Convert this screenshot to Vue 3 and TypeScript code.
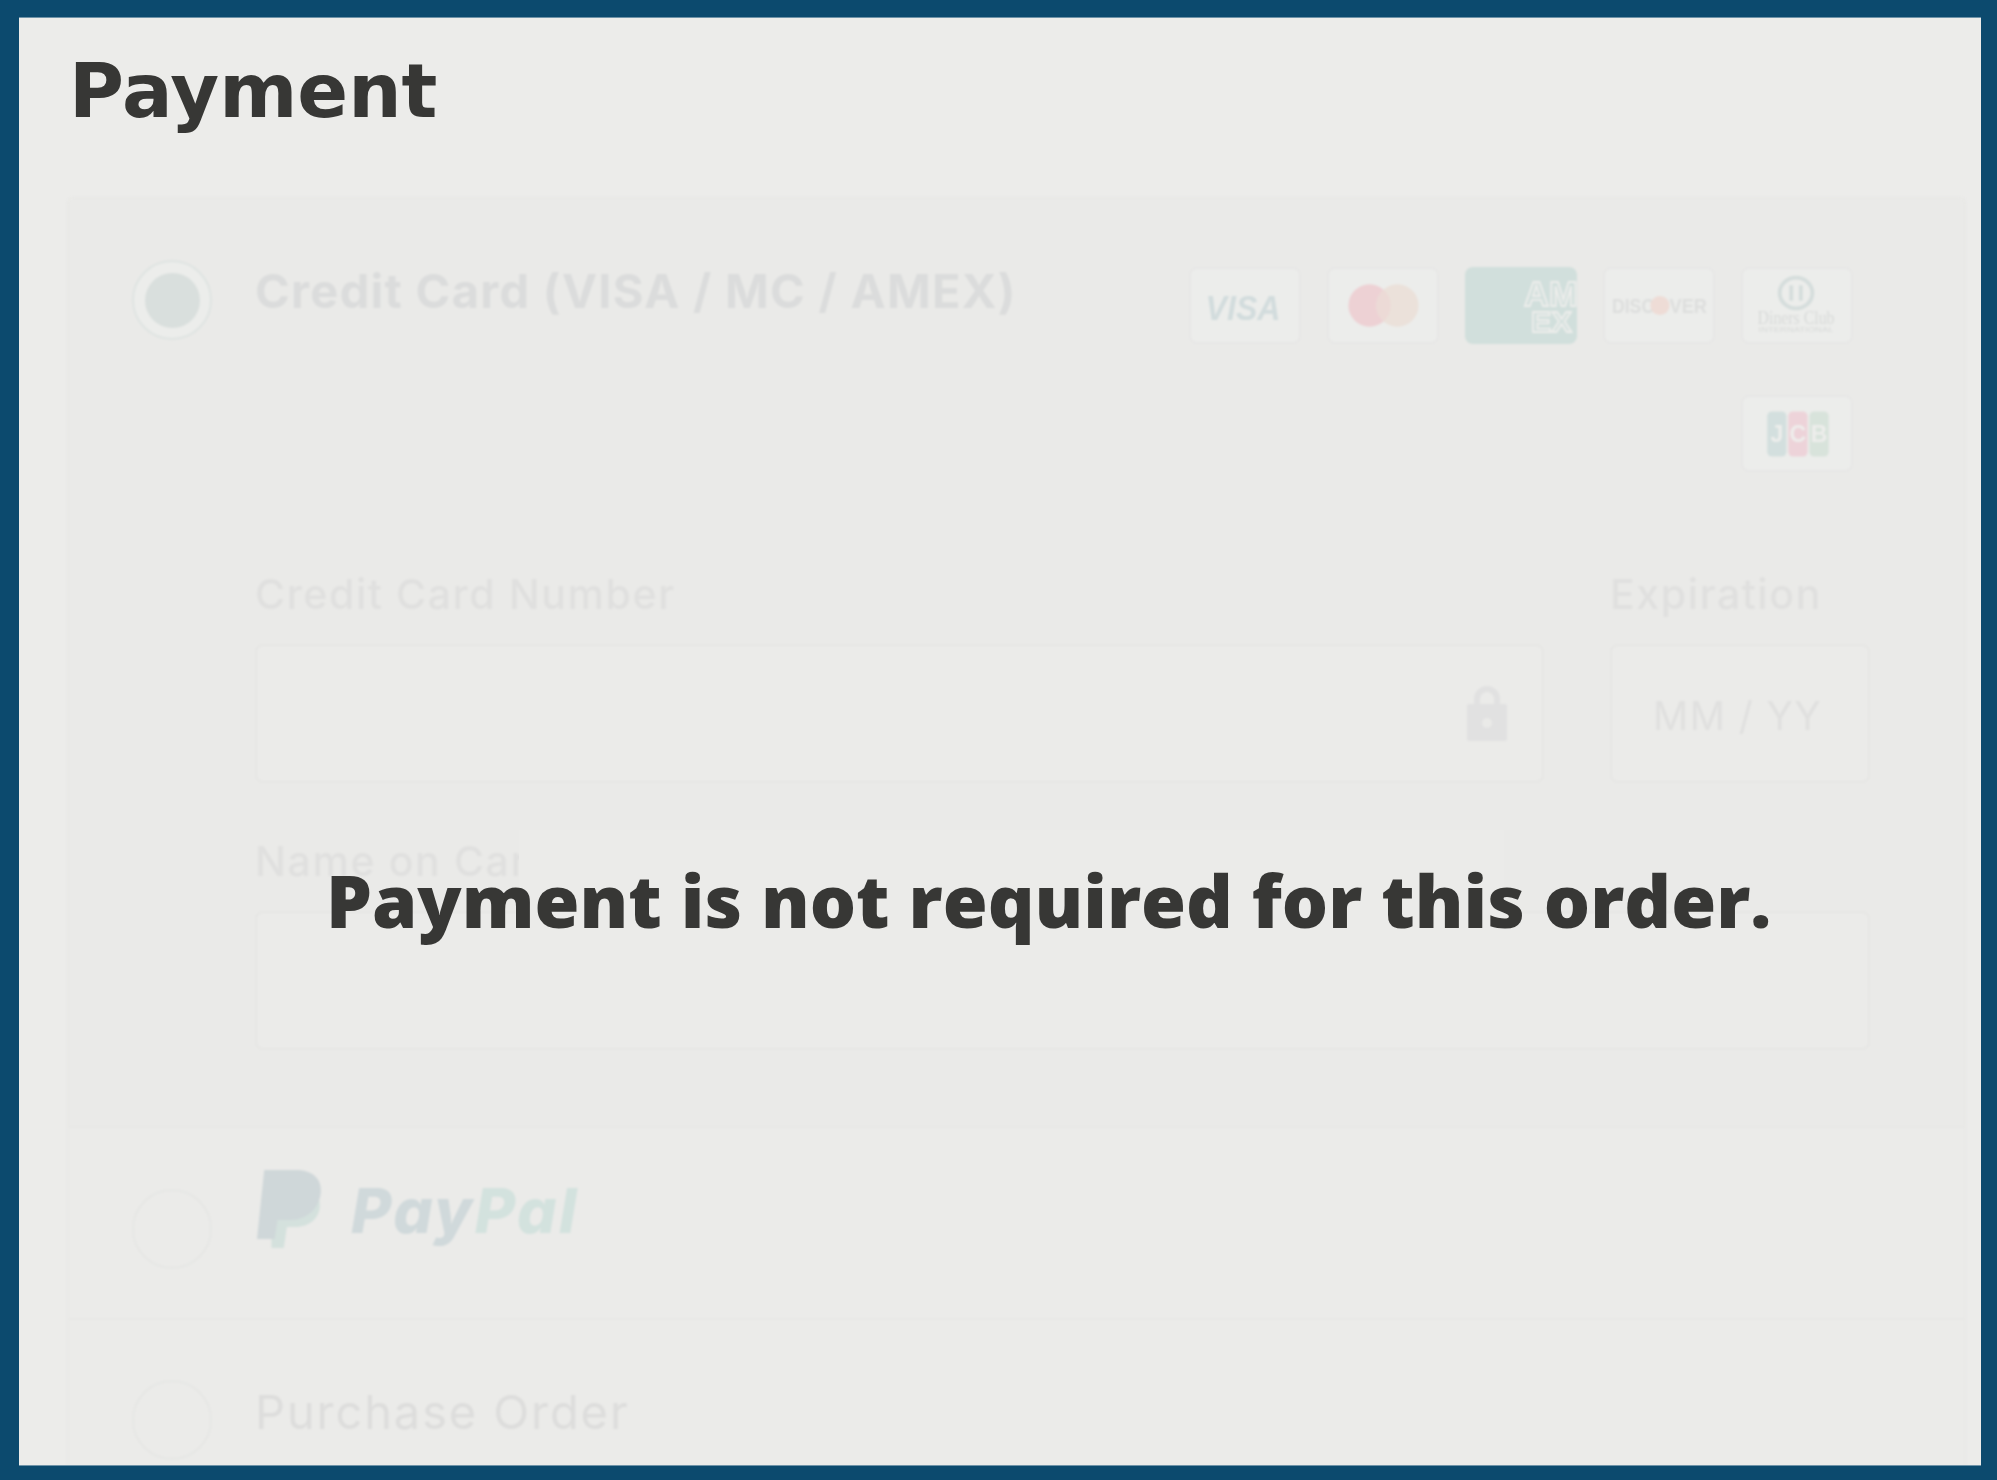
<script setup lang="ts">
// Checkout payment step, dimmed and blurred behind a "not required" notice.
const notice = "Payment is not required for this order.";
const jcbBars = [
  { x: 24, fill: "#d3dfde", letter: "J" },
  { x: 46, fill: "#edd3d9", letter: "C" },
  { x: 68, fill: "#d8e3db", letter: "B" },
];
</script>

<template>
  <div class="frame">
    <main class="panel">
      <h1 class="title">Payment</h1>

      <div class="faded">
        <section class="card">
          <div class="row row-credit">
            <span class="radio radio-on"><span class="radio-dot" /></span>
            <div class="row-body">
              <div class="head">
                <h2 class="method">Credit Card (VISA / MC / AMEX)</h2>
                <div class="logos">
                  <svg class="logo" viewBox="0 0 110 76">
                    <text x="53" y="53" text-anchor="middle" class="visa" textLength="78" lengthAdjust="spacingAndGlyphs">VISA</text>
                  </svg>
                  <svg class="logo" viewBox="0 0 110 76">
                    <circle cx="41" cy="38" r="22" fill="#edd1d4" />
                    <circle cx="70" cy="38" r="22" fill="#ebe1da" />
                    <path d="M55.500 21.500a22 22 0 0 1 0 33a22 22 0 0 1 0-33z" fill="#ecdad6" />
                  </svg>
                  <svg class="logo logo-amex" viewBox="0 0 110 76">
                    <text x="58" y="38" class="amex">AM</text>
                    <text x="65" y="64" class="amex amex-low">EX</text>
                  </svg>
                  <svg class="logo" viewBox="0 0 110 76">
                    <text x="6" y="46" class="discover" textLength="44" lengthAdjust="spacingAndGlyphs">DISC</text>
                    <circle cx="56" cy="38" r="10" fill="#eedcd6" />
                    <text x="66" y="46" class="discover" textLength="39" lengthAdjust="spacingAndGlyphs">VER</text>
                  </svg>
                  <svg class="logo" viewBox="0 0 110 76">
                    <ellipse cx="54" cy="25" rx="17" ry="16" fill="none" stroke="#d5dddc" stroke-width="4" />
                    <rect x="47" y="17" width="4" height="16" fill="#d5dddc" />
                    <rect x="57" y="17" width="4" height="16" fill="#d5dddc" />
                    <text x="54" y="57" text-anchor="middle" class="diners" textLength="80" lengthAdjust="spacingAndGlyphs">Diners Club</text>
                    <text x="54" y="66" text-anchor="middle" class="diners-sub" textLength="78" lengthAdjust="spacingAndGlyphs">INTERNATIONAL</text>
                  </svg>
                  <svg class="logo" viewBox="0 0 110 76">
                    <g v-for="bar in jcbBars" :key="bar.letter">
                      <rect :x="bar.x" y="15" width="20" height="47" rx="5" :fill="bar.fill" />
                      <text :x="bar.x + 10" y="47" text-anchor="middle" class="jcb">{{ bar.letter }}</text>
                    </g>
                  </svg>
                </div>
              </div>

              <div class="fields">
                <div class="field">
                  <label class="label">Credit Card Number</label>
                  <div class="input input-lock">
                    <svg class="lock" viewBox="0 0 40 55">
                      <path d="M10 20V13a10 10 0 0 1 20 0v7" fill="none" stroke="#e1e1e1" stroke-width="6" />
                      <rect x="0" y="18" width="40" height="37" rx="2" fill="#e1e1e1" />
                      <circle cx="20" cy="37" r="5" fill="#eaeae8" />
                    </svg>
                  </div>
                </div>
                <div class="field">
                  <label class="label">Expiration</label>
                  <div class="input input-exp">MM / YY</div>
                </div>
                <div class="field field-wide">
                  <label class="label">Name on Card</label>
                  <div class="input" />
                </div>
              </div>
            </div>
          </div>

          <div class="row row-paypal">
            <span class="radio" />
            <div class="paypal">
              <svg class="paypal-mark" viewBox="0 0 66 78" preserveAspectRatio="none">
                <path d="M14 16h26c14 0 21 9 21 19c0 13-10 22-24 22h-8l-3 21H14z" fill="#d4e1dd" />
                <path d="M7 0h31c15 0 24 8 24 20c0 17-13 30-30 30H20l-3 19H0z" fill="#cfd7d9" />
              </svg>
              <span class="paypal-word"><span class="pay">Pay</span><span class="pal">Pal</span></span>
            </div>
          </div>

          <div class="row row-po">
            <span class="radio" />
            <h2 class="method method-plain">Purchase Order</h2>
          </div>
        </section>
      </div>

      <div class="notice-box" />
      <p class="notice">{{ notice }}</p>
    </main>
  </div>
</template>

<style scoped>
.frame {
  box-sizing: border-box;
  height: 1480px;
  padding: 18px 16px 15px 19px;
  display: flex;
  background: #0c4a6e;
}
.panel {
  position: relative;
  flex: 1;
  overflow: hidden;
  background: #ececea;
  box-shadow: 0 -1px 0 #6f93a8, 0 1px 0 #6f93a8;
}
.title {
  margin: 0;
  padding: 28px 0 0 50px;
  height: 153px;
  box-sizing: border-box;
  font: 700 75px/90px "DejaVu Sans", sans-serif;
  color: #373735;
  filter: blur(0.7px);
}
.faded {
  margin: 26px 15px 0 48px;
  filter: blur(0.8px);
}
.card {
  border: 2px solid #e8e8e6;
  border-bottom: none;
  border-radius: 6px 6px 0 0;
  background: #eaeae8;
}
.row {
  display: flex;
  gap: 43px;
  padding-left: 63px;
  padding-right: 94px;
}
.row-credit { padding-top: 61px; padding-bottom: 76px; }
.row-paypal {
  height: 192px;
  box-sizing: border-box;
  padding-top: 42px;
  border-top: 2px solid #e8e8e6;
  background: #ebebe9;
}
.row-paypal .radio { margin-top: 19px; }
.row-po {
  height: 200px;
  box-sizing: border-box;
  padding-top: 60px;
  border-top: 2px solid #e8e8e6;
  background: #ebebe9;
}
.radio {
  box-sizing: border-box;
  flex: none;
  width: 80px;
  height: 80px;
  border: 2px solid #e6e7e5;
  border-radius: 50%;
}
.radio-on {
  display: flex;
  align-items: center;
  justify-content: center;
  border-color: #dfe4e2;
  background: #ecedeb;
}
.radio-dot {
  width: 55px;
  height: 55px;
  border-radius: 50%;
  background: #d9dfdd;
}
.row-body { flex: 1; min-width: 0; }
.head {
  display: flex;
  justify-content: space-between;
  align-items: flex-start;
}
.method {
  margin: 2px 0 0;
  font: 700 47px/58px Inter, "Noto Sans", sans-serif;
  letter-spacing: 1.3px;
  color: #dbdcdc;
}
.method-plain {
  margin-top: 3px;
  font-weight: 400;
  letter-spacing: 1.9px;
  color: #dddddc;
}
.logos {
  display: flex;
  flex-wrap: wrap;
  justify-content: flex-end;
  gap: 51px 26px;
  width: 664px;
  margin: 7px 17px 0 0;
}
.logo {
  box-sizing: border-box;
  width: 112px;
  height: 77px;
  border: 2px solid #e7e7e6;
  border-radius: 8px;
  background: #ecedeb;
}
.logo-amex {
  border: none;
  background: #d1dfdc;
}
.visa { font: italic 700 37px "Liberation Sans", sans-serif; fill: #d2dcdd; }
.amex { font: 700 34px "Liberation Sans", sans-serif; fill: #d1dfdc; stroke: #eeeeec; stroke-width: 1.8px; }
.amex-low { font-size: 30px; }
.discover { font: 700 22px "Liberation Sans", sans-serif; fill: #dddedd; }
.diners { font: 400 19px "Liberation Serif", serif; fill: #d8dad9; }
.diners-sub { font: 400 8px "Liberation Sans", sans-serif; fill: #d8dad9; }
.jcb { font: 700 24px "Liberation Sans", sans-serif; fill: #eeeeec; }
.fields {
  display: grid;
  grid-template-columns: 1289px 260px;
  column-gap: 66px;
  row-gap: 56px;
  margin-top: 100px;
}
.field-wide { grid-column: 1 / -1; }
.label {
  display: block;
  height: 72px;
  font: 500 41px/44px Inter, "Noto Sans", sans-serif;
  letter-spacing: 1.6px;
  color: #e0e0df;
}
.input {
  box-sizing: border-box;
  height: 139px;
  display: flex;
  align-items: center;
  border: 2px solid #e6e6e4;
  border-radius: 8px;
  background: #ebebe9;
}
.input-lock { justify-content: flex-end; padding-right: 35px; }
.lock { width: 40px; height: 55px; }
.input-exp {
  padding: 3px 0 0 41px;
  font: 400 39px Inter, "Noto Sans", sans-serif;
  letter-spacing: 1.4px;
  color: #e0e0df;
  white-space: nowrap;
}
.paypal {
  display: flex;
  align-items: flex-start;
  gap: 26px;
  height: 78px;
  margin-left: 2px;
}
.paypal-mark { width: 68px; height: 78px; }
.paypal-word {
  margin-top: 6px;
  font: italic 800 62px/70px Inter, "Liberation Sans", sans-serif;
  letter-spacing: 2.4px;
}
.pay { color: #d0d9db; }
.pal { color: #d3e2de; }
/* Lighter patch behind the notice; it cuts off the label underneath. */
.notice-box {
  position: absolute;
  left: 500px;
  top: 812px;
  width: 985px;
  height: 132px;
  background: #ebebe9;
}
.notice {
  position: absolute;
  left: 307px;
  top: 833px;
  margin: 0;
  font: 800 72.800px/98px "Open Sans", sans-serif;
  white-space: nowrap;
  color: #373735;
}
</style>

<style>
html, body { background: #0c4a6e; overflow: hidden; }
</style>
